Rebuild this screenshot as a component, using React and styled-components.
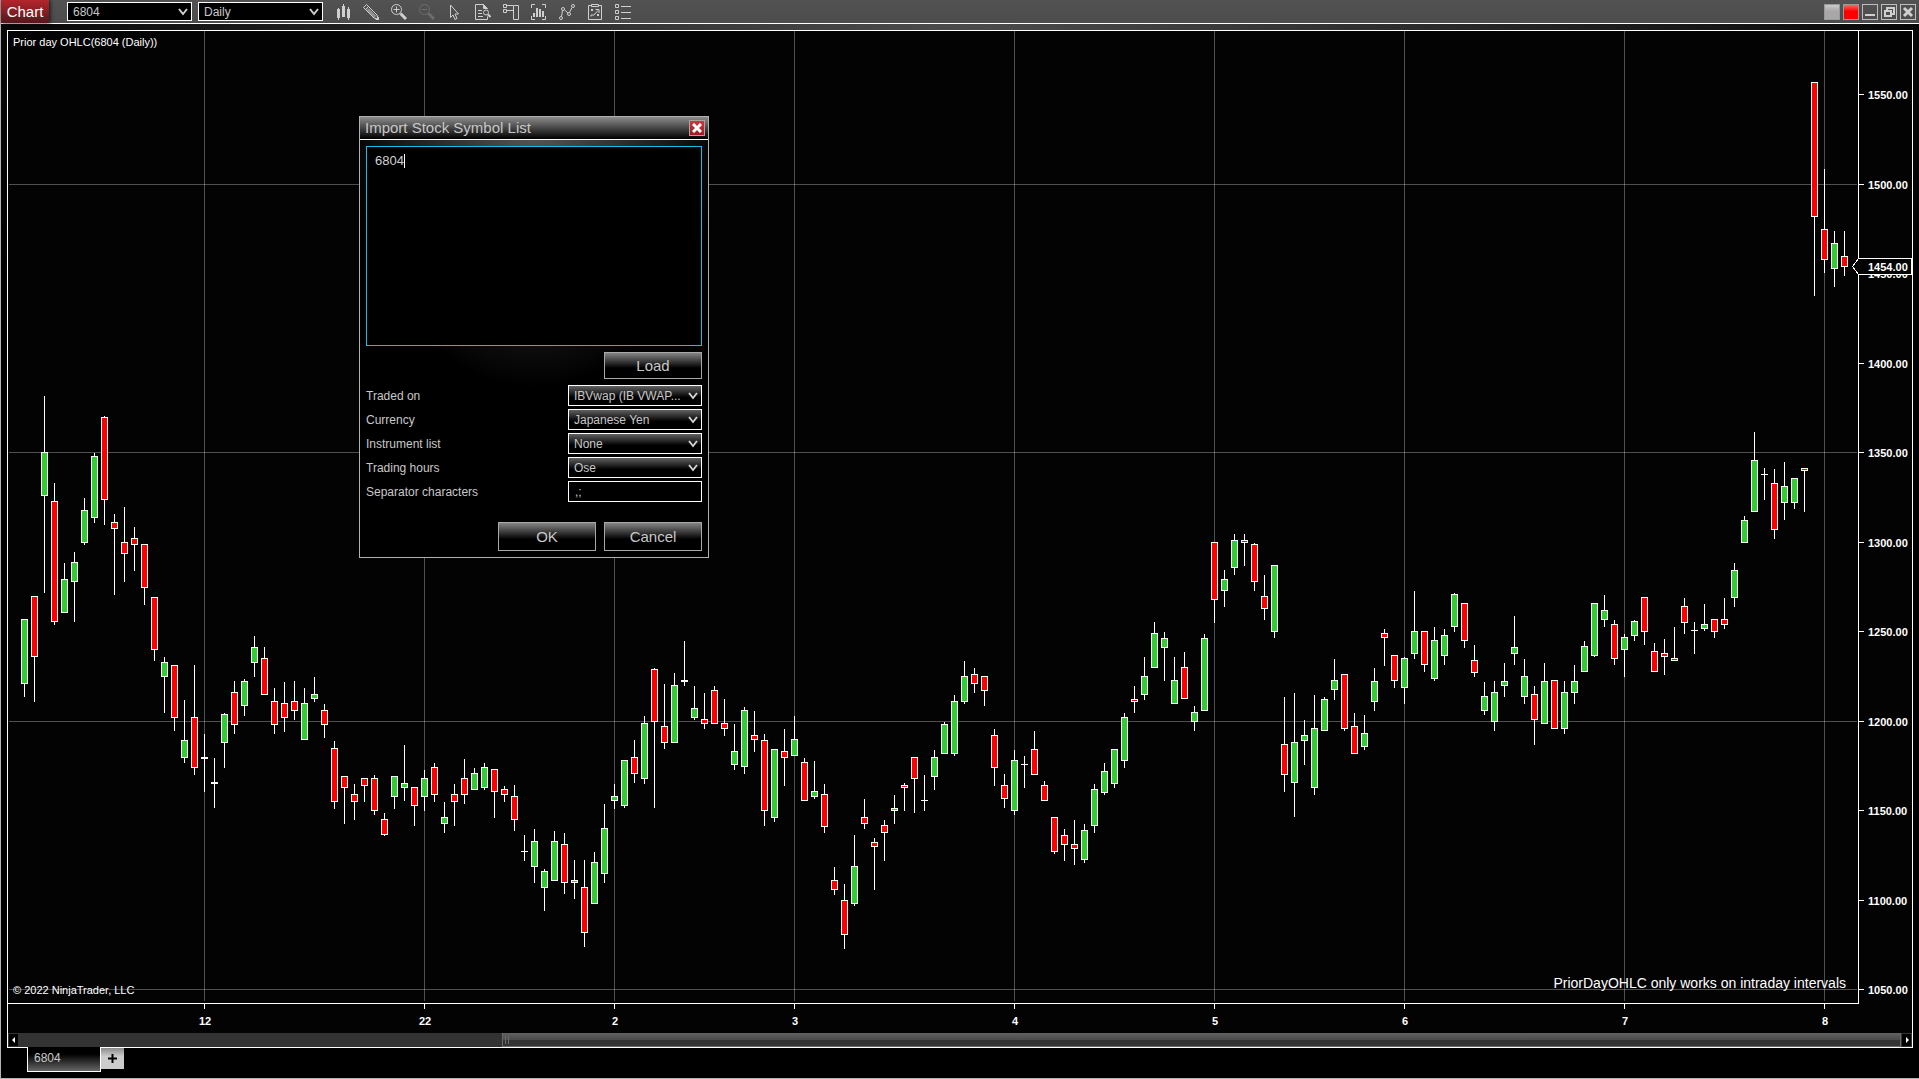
import React from 'react';
import styled, { createGlobalStyle, css } from 'styled-components';

// one row per bar: high, body top, body bottom, low, 1 = up / 0 = down
const BARS = [
	[619, 619, 684, 697, 1], [596, 596, 657, 702, 0], [396, 452, 496, 593, 1], [483, 501, 622, 625, 0],
	[563, 579, 613, 613, 1], [552, 562, 582, 622, 1], [498, 510, 543, 545, 1], [453, 456, 518, 523, 1],
	[416, 417, 500, 525, 0], [514, 522, 529, 595, 0], [507, 542, 554, 582, 0], [527, 538, 545, 571, 0],
	[544, 544, 588, 605, 0], [597, 597, 650, 661, 0], [657, 662, 677, 713, 1], [665, 665, 718, 731, 0],
	[700, 740, 758, 763, 1], [665, 717, 768, 775, 0], [734, 757, 759, 792, 1], [758, 782, 784, 808, 1],
	[713, 714, 743, 768, 1], [681, 692, 725, 734, 0], [679, 681, 706, 716, 1], [636, 647, 663, 677, 1],
	[647, 658, 695, 695, 0], [688, 701, 725, 734, 0], [682, 703, 718, 732, 0], [681, 701, 711, 720, 0],
	[688, 703, 740, 740, 1], [677, 694, 699, 702, 1], [704, 710, 725, 738, 0], [741, 748, 802, 809, 0],
	[776, 776, 788, 824, 0], [784, 794, 802, 820, 0], [778, 778, 786, 802, 0], [775, 778, 811, 815, 0],
	[813, 819, 835, 836, 0], [776, 776, 797, 809, 1], [745, 783, 788, 801, 1], [787, 787, 806, 826, 0],
	[770, 778, 797, 811, 1], [763, 767, 795, 802, 0], [802, 817, 824, 833, 1], [784, 794, 802, 826, 0],
	[759, 778, 795, 804, 0], [768, 773, 790, 790, 1], [763, 767, 788, 790, 1], [769, 769, 792, 818, 0],
	[786, 789, 795, 802, 0], [785, 796, 820, 831, 0], [835, 851, 852, 861, 1], [829, 841, 867, 883, 1],
	[869, 871, 888, 911, 1], [831, 841, 881, 881, 1], [833, 844, 883, 894, 0], [860, 880, 883, 899, 1],
	[860, 887, 933, 947, 0], [852, 862, 904, 904, 1], [804, 828, 874, 883, 1], [784, 796, 801, 809, 1],
	[760, 760, 806, 808, 1], [740, 757, 774, 783, 0], [716, 723, 779, 784, 1], [668, 669, 722, 808, 0],
	[684, 726, 743, 749, 0], [673, 685, 743, 743, 1], [641, 680, 682, 686, 1], [686, 708, 718, 720, 1],
	[693, 719, 724, 729, 0], [686, 690, 724, 724, 0], [699, 723, 729, 736, 0], [724, 751, 765, 770, 1],
	[707, 710, 767, 774, 1], [711, 735, 740, 752, 0], [734, 740, 811, 826, 0], [749, 749, 818, 822, 1],
	[729, 751, 758, 786, 0], [716, 739, 756, 756, 1], [758, 762, 801, 801, 0], [761, 791, 797, 799, 1],
	[784, 794, 827, 833, 0], [867, 880, 890, 895, 0], [884, 900, 935, 949, 0], [835, 866, 904, 906, 1],
	[799, 817, 824, 829, 0], [838, 842, 847, 890, 0], [820, 825, 833, 861, 0], [795, 808, 811, 824, 1],
	[783, 785, 788, 811, 0], [757, 757, 779, 813, 0], [775, 800, 801, 811, 1], [750, 757, 777, 790, 1],
	[722, 724, 754, 754, 1], [695, 701, 754, 756, 1], [661, 676, 702, 704, 1], [668, 674, 684, 693, 0],
	[676, 676, 691, 706, 0], [729, 735, 768, 786, 0], [774, 785, 799, 808, 0], [750, 760, 811, 815, 1],
	[756, 764, 765, 788, 1], [731, 749, 775, 775, 0], [781, 785, 801, 801, 0], [817, 817, 852, 854, 0],
	[829, 835, 845, 861, 0], [820, 844, 849, 865, 0], [824, 830, 860, 863, 1], [784, 789, 826, 833, 1],
	[763, 771, 793, 795, 1], [749, 749, 784, 788, 1], [713, 717, 761, 768, 1], [686, 699, 702, 713, 0],
	[657, 676, 695, 700, 1], [622, 633, 668, 668, 1], [632, 638, 648, 681, 1], [657, 680, 704, 704, 1],
	[652, 667, 699, 699, 0], [706, 712, 722, 731, 1], [634, 638, 711, 711, 1], [542, 542, 600, 623, 0],
	[570, 579, 591, 607, 1], [534, 540, 568, 575, 1], [534, 540, 543, 566, 0], [543, 544, 582, 591, 0],
	[575, 596, 609, 620, 0], [565, 565, 632, 638, 1], [697, 744, 775, 792, 0], [693, 742, 783, 817, 1],
	[720, 735, 741, 765, 1], [695, 728, 788, 795, 1], [697, 699, 731, 731, 1], [659, 680, 690, 700, 1],
	[674, 674, 729, 731, 0], [713, 726, 754, 754, 0], [715, 733, 747, 750, 1], [668, 681, 702, 711, 1],
	[629, 633, 638, 666, 0], [655, 655, 681, 688, 0], [657, 658, 688, 704, 1], [591, 631, 654, 659, 1],
	[631, 631, 665, 672, 0], [627, 640, 679, 681, 1], [629, 635, 656, 665, 1], [593, 594, 627, 632, 1],
	[603, 603, 641, 648, 0], [645, 660, 673, 677, 0], [682, 696, 711, 715, 1], [681, 692, 722, 731, 1],
	[663, 681, 686, 697, 1], [616, 647, 654, 665, 1], [659, 676, 697, 704, 1], [686, 694, 720, 745, 0],
	[663, 681, 724, 724, 1], [680, 680, 729, 729, 0], [681, 692, 729, 734, 1], [665, 681, 693, 704, 1],
	[641, 646, 672, 672, 1], [603, 603, 656, 657, 1], [595, 610, 620, 627, 1], [620, 624, 659, 665, 0],
	[634, 637, 650, 677, 1], [620, 621, 636, 641, 1], [597, 597, 632, 645, 0], [643, 651, 672, 672, 0],
	[639, 653, 657, 675, 0], [627, 658, 661, 661, 0], [598, 606, 623, 634, 0], [622, 630, 631, 654, 1],
	[604, 624, 629, 631, 1], [619, 619, 632, 638, 0], [598, 619, 625, 629, 0], [563, 570, 598, 607, 1],
	[516, 520, 543, 543, 1], [432, 460, 512, 512, 1], [468, 474, 475, 500, 1], [469, 483, 530, 539, 0],
	[462, 486, 503, 520, 1], [478, 478, 503, 509, 1], [468, 468, 471, 512, 0], [82, 82, 217, 296, 0],
	[169, 229, 260, 273, 0], [231, 243, 269, 287, 1], [231, 256, 267, 276, 0],
];

const PRICES = [
	{ label: '1550.00', y: 94 },
	{ label: '1500.00', y: 184, grid: true },
	{ label: '1450.00', y: 273 },
	{ label: '1400.00', y: 363 },
	{ label: '1350.00', y: 452, grid: true },
	{ label: '1300.00', y: 542 },
	{ label: '1250.00', y: 631 },
	{ label: '1200.00', y: 721, grid: true },
	{ label: '1150.00', y: 810 },
	{ label: '1100.00', y: 900 },
	{ label: '1050.00', y: 989, grid: true },
];

const DATES = [
	['12', 204],
	['22', 424],
	['2', 614],
	['3', 794],
	['4', 1014],
	['5', 1214],
	['6', 1404],
	['7', 1624],
	['8', 1824],
];

const Candle = ({ x, bar }) => {
	const [high, top, bottom, low, up] = bar;
	const inner = bottom - top - 2;

	return (
		<g>
			<rect x={x} y={high} width='1' height={low - high} fill='#fff' />
			<rect x={x - 3} y={top} width='7' height={bottom - top} fill='#fff' />
			{inner > 0 && (
				<rect
					x={x - 2}
					y={top + 1}
					width='5'
					height={inner}
					fill={up ? '#32cd32' : '#ff0000'}
				/>
			)}
		</g>
	);
};

const PriceChart = () => (
	<ChartSvg viewBox='8 31 1904 1002' role='img' aria-label='6804 daily chart'>
		<g fill='#fff' fillOpacity='0.3'>
			{PRICES.filter((p) => p.grid).map((p) => (
				<rect key={p.y} x='9' y={p.y} width='1848' height='1' />
			))}
			{DATES.map(([, x]) => (
				<rect key={x} x={x} y='31' width='1' height='970' />
			))}
		</g>

		{BARS.map((bar, i) => (
			<Candle key={i} x={24 + i * 10} bar={bar} />
		))}

		<rect x='1858' y='31' width='1' height='973' fill='#fff' />
		<rect x='8' y='1003' width='1851' height='1' fill='#fff' />

		{PRICES.map((p) => (
			<g key={p.label} fill='#fff'>
				<rect x='1859' y={p.y} width='5' height='1' />
				<AxisText x='1868' y={p.y + 5}>
					{p.label}
				</AxisText>
			</g>
		))}
		{DATES.map(([label, x]) => (
			<g key={x} fill='#fff'>
				<rect x={x} y='1004' width='1' height='5' />
				<AxisText x={x + 1} y='1025' textAnchor='middle'>
					{label}
				</AxisText>
			</g>
		))}

		<path
			d='M1852.5 266.5 L1858.5 258.5 H1911.5 V274.5 H1858.5 Z'
			fill='#030303'
			stroke='#fff'
		/>
		<AxisText x='1868' y='271' fill='#fff'>
			1454.00
		</AxisText>
	</ChartSvg>
);

const ICONS = [
	{
		label: 'Bars type',
		art: (
			<path
				fill='currentColor'
				d='M2 5h1V4h1v1h1v9H4v2H3v-2H2zM7 2h1V0h1v2h1v11H7zM12 5h1V3h1v2h1v9h-1v2h-1v-2h-1z'
			/>
		),
	},
	{
		label: 'Drawing tools',
		art: (
			<g fill='none' stroke='currentColor'>
				<path d='M0.5 3.5 3.5 0.5 14 11 15.5 15.5 11 14Z' />
				<path d='M2.5 5.5 5.5 2.5M5 4.5 13 12.5M4 5.5 12 13.5' />
				<path fill='currentColor' d='M13 15.5h2.5V13z' />
			</g>
		),
	},
	{
		label: 'Zoom in',
		art: (
			<g fill='none' stroke='currentColor'>
				<circle cx='5.5' cy='5.5' r='5' />
				<path d='M5.5 2.5v6M2.5 5.5h6' />
				<path strokeWidth='3' d='M9.5 9.5 15 15' />
			</g>
		),
	},
	{
		label: 'Zoom out',
		dim: true,
		art: (
			<g fill='none' stroke='currentColor'>
				<circle cx='5.5' cy='5.5' r='5' />
				<path d='M2.5 5.5h6' />
				<path strokeWidth='3' d='M9.5 9.5 15 15' />
			</g>
		),
	},
	{
		label: 'Cursor',
		art: (
			<path
				fill='none'
				stroke='currentColor'
				d='M3.5 1v12.5L6 11l2 4.5 2-1L8 10h3.5z'
			/>
		),
	},
	{
		label: 'Data box',
		art: (
			<g fill='none' stroke='currentColor'>
				<path d='M12.5 12.5v3H0.5v-15h8l4 4' />
				<path fill='currentColor' d='M8.5 0.5v4h4z' />
				<path d='M3 6.5h4M3 9.5h4M3 12.5h5' />
				<circle cx='11' cy='8.5' r='2.5' />
				<path strokeWidth='2' d='M13 10.5 15.5 13' />
			</g>
		),
	},
	{
		label: 'Chart trader',
		art: (
			<path
				fill='none'
				stroke='currentColor'
				d='M0.5 0.5h3v3h-3zM0.5 5.5h3v3h-3zM10.5 1.5h5v14h-5zM4 1.5h6M4 6.5h6'
			/>
		),
	},
	{
		label: 'Data series',
		art: (
			<g>
				<path
					fill='none'
					stroke='currentColor'
					d='M0.5 4V0.5H4M11 0.5h3.5V4M14.5 12v3.5H11M4 15.5H0.5V12'
				/>
				<path
					fill='currentColor'
					d='M2 9h2v4H2zM5 4h2v9H5zM8 5h2v8H8zM11 7h2v6h-2z'
				/>
			</g>
		),
	},
	{
		label: 'Indicators',
		art: (
			<g fill='none' stroke='currentColor'>
				<circle cx='2' cy='14' r='1.5' />
				<circle cx='4' cy='5' r='1.5' />
				<circle cx='10' cy='10' r='1.5' />
				<circle cx='14' cy='2' r='1.5' />
				<path d='M2.5 12.5 3.5 6.5M5.5 6 9 9M10.5 8.5 13 3.5' />
			</g>
		),
	},
	{
		label: 'Strategies',
		art: (
			<g fill='none' stroke='currentColor'>
				<path d='M4 1.5H1.5v14h13v-14H12M4.5 0.5h7v2h-7z' />
				<path d='M4 5l2 2M6 5 4 7M10 10l2 2M12 10l-2 2M4 12.5V11h3l4-4.5M8.5 5.5H12V9' />
			</g>
		),
	},
	{
		label: 'Properties',
		art: (
			<path
				fill='none'
				stroke='currentColor'
				d='M0.5 0.5h3v3h-3zM0.5 6.5h3v3h-3zM0.5 12.5h3v3h-3zM6 2.5h10M6 8.5h10M6 14.5h10'
			/>
		),
	},
];

const Dropdown = ({ id, value, dark, label }) => (
	<SelectWrap $dark={dark}>
		<SelectBox id={id} aria-label={label} defaultValue={value} $dark={dark}>
			<option>{value}</option>
		</SelectBox>
		<Chevron viewBox='0 0 10 8' aria-hidden='true'>
			<path d='M1 1 5 6 9 1' fill='none' stroke='currentColor' strokeWidth='2' />
		</Chevron>
	</SelectWrap>
);

const FIELDS = [
	['traded-on', 'Traded on', 'IBVwap (IB VWAP...'],
	['currency', 'Currency', 'Japanese Yen'],
	['instrument-list', 'Instrument list', 'None'],
	['trading-hours', 'Trading hours', 'Ose'],
];

const ImportDialog = () => (
	<Dialog role='dialog' aria-labelledby='import-title'>
		<DialogTitle>
			<DialogHeading id='import-title'>Import Stock Symbol List</DialogHeading>
			<CloseButton aria-label='Close'>
				<svg width='10' height='10' viewBox='0 0 10 10' aria-hidden='true'>
					<path d='M1 1 9 9M9 1 1 9' stroke='#fff' strokeWidth='3' />
				</svg>
			</CloseButton>
		</DialogTitle>
		<DialogBody>
			<SymbolBox>
				<SymbolInput aria-label='Symbols' defaultValue='6804' spellCheck={false} />
				<Caret />
			</SymbolBox>
			<LoadRow>
				<PushButton $height={27}>Load</PushButton>
			</LoadRow>
			<Fields>
				{FIELDS.map(([id, label, value]) => (
					<Field key={id}>
						<FieldLabel htmlFor={id}>{label}</FieldLabel>
						<Dropdown id={id} value={value} />
					</Field>
				))}
				<Field>
					<FieldLabel htmlFor='separators'>Separator characters</FieldLabel>
					<TextInput id='separators' defaultValue=',;' />
				</Field>
			</Fields>
			<Actions>
				<PushButton $height={29}>OK</PushButton>
				<PushButton $height={29}>Cancel</PushButton>
			</Actions>
		</DialogBody>
	</Dialog>
);

const App = () => {
	return (
		<>
			<GlobalStyle />
			<Window>
				<Toolbar>
					<ChartMenu>Chart</ChartMenu>
					<Selectors>
						<Dropdown dark value='6804' label='Instrument' />
						<Dropdown dark value='Daily' label='Interval' />
					</Selectors>
					<Tools>
						{ICONS.map((icon) => (
							<ToolButton key={icon.label} aria-label={icon.label} $dim={icon.dim}>
								<svg width='16' height='16' viewBox='0 0 16 16' aria-hidden='true'>
									{icon.art}
								</svg>
							</ToolButton>
						))}
					</Tools>
					<WindowButtons>
						<LinkButton aria-label='Instrument link' $color='#a9a7a8' />
						<LinkButton aria-label='Interval link' $color='#ff0000' />
						<WindowButton aria-label='Minimize'>
							<svg width='14' height='14' viewBox='0 0 14 14' aria-hidden='true'>
								<path d='M2 9h10v2H2z' fill='currentColor' />
							</svg>
						</WindowButton>
						<WindowButton aria-label='Restore'>
							<svg width='14' height='14' viewBox='0 0 14 14' aria-hidden='true'>
								<path
									d='M5 6V3h7v6H9M3 6h6v5H3z'
									fill='none'
									stroke='currentColor'
									strokeWidth='2'
								/>
							</svg>
						</WindowButton>
						<WindowButton aria-label='Close window'>
							<svg width='14' height='14' viewBox='0 0 14 14' aria-hidden='true'>
								<path d='M3 3l8 8M11 3l-8 8' stroke='currentColor' strokeWidth='3' />
							</svg>
						</WindowButton>
					</WindowButtons>
				</Toolbar>

				<Frame>
					<ChartArea>
						<PriceChart />
						<IndicatorLabel>Prior day OHLC(6804 (Daily))</IndicatorLabel>
						<Copyright>© 2022 NinjaTrader, LLC</Copyright>
						<Notice>PriorDayOHLC only works on intraday intervals</Notice>
					</ChartArea>
					<Scrollbar>
						<ScrollArrow aria-label='Scroll left'>
							<svg width='4' height='6' viewBox='0 0 4 6' aria-hidden='true'>
								<path d='M3 0v6L0 3z' fill='#fff' />
							</svg>
						</ScrollArrow>
						<ScrollThumb>
							<Grip />
						</ScrollThumb>
						<ScrollArrow aria-label='Scroll right'>
							<svg width='4' height='6' viewBox='0 0 4 6' aria-hidden='true'>
								<path d='M1 0v6l3-3z' fill='#fff' />
							</svg>
						</ScrollArrow>
					</Scrollbar>
				</Frame>

				<Tabs>
					<Tab>6804</Tab>
					<AddTab aria-label='New tab'>
						<svg width='9' height='9' viewBox='0 0 9 9' aria-hidden='true'>
							<path d='M4.5 0v9M0 4.5h9' stroke='#000' strokeWidth='2' />
						</svg>
					</AddTab>
				</Tabs>

				<ImportDialog />
			</Window>
		</>
	);
};

export default App;

const GlobalStyle = createGlobalStyle`
	* {
		box-sizing: border-box;
	}

	body {
		margin: 0;
		background-color: #000;
		color: #c8c8c8;
		font-family: "Liberation Sans", Arial, sans-serif;
		font-size: 12px;
	}

	button, select, input, textarea {
		margin: 0;
		padding: 0;
		color: inherit;
		font: inherit;
		outline: none;
		border-radius: 0;
	}
`;

const Window = styled.div`
	position: relative;
	display: flex;
	flex-direction: column;
	min-height: 100vh;
	border-left: 1px solid #b4b4b4;
	border-bottom: 1px solid #b4b4b4;
	background: radial-gradient(ellipse 55% 75% at top center, #4d4d4d, #000);
`;

const Toolbar = styled.header`
	display: flex;
	align-items: center;
	height: 24px;
	padding-right: 3px;
	border-bottom: 1px solid #fff;
	background: linear-gradient(#525252, #4c4c4c);
`;

const ChartMenu = styled.button`
	align-self: stretch;
	width: 48px;
	border: none;
	background: linear-gradient(#b3262c, #55181c);
	box-shadow: 1px 0 4px #111;
	color: #fff;
	font-size: 15px;
`;

const Selectors = styled.div`
	display: flex;
	gap: 6px;
	margin: 0 12px 0 18px;
`;

const SelectWrap = styled.div`
	position: relative;
	width: ${(p) => (p.$dark ? '125px' : '134px')};
`;

const SelectBox = styled.select`
	display: block;
	appearance: none;
	width: 100%;
	height: 21px;
	padding: 0 20px 0 5px;
	border: 1px solid #fff;
	background: linear-gradient(#606060, #000 60%);
	color: #c8c8c8;

	${(p) =>
		p.$dark &&
		css`
			height: 19px;
			background: #000;
		`}
`;

const Chevron = styled.svg`
	position: absolute;
	top: 50%;
	right: 4px;
	width: 10px;
	height: 8px;
	margin-top: -4px;
	pointer-events: none;
	color: #d0d0d0;
`;

const Tools = styled.div`
	display: flex;
	gap: 12px;
`;

const ToolButton = styled.button`
	display: flex;
	width: 16px;
	height: 16px;
	border: none;
	background: none;
	color: ${(p) => (p.$dim ? '#6c6c6c' : '#cfcfcf')};
`;

const WindowButtons = styled.div`
	display: flex;
	gap: 3px;
	margin-left: auto;
`;

const WindowButton = styled.button`
	display: flex;
	width: 16px;
	height: 16px;
	border: 1px solid #bdbdbd;
	background: none;
	color: #cfcfcf;
`;

const LinkButton = styled(WindowButton)`
	background: linear-gradient(rgba(255, 255, 255, 0.4), rgba(255, 255, 255, 0) 45%)
		${(p) => p.$color};
	border-color: #9a9a9a;
`;

const Frame = styled.main`
	margin: 6px 6px 0;
	border: 1px solid #fff;
	background-color: #030303;
`;

const ChartArea = styled.div`
	position: relative;
	color: #fff;
`;

const ChartSvg = styled.svg`
	display: block;
	width: 100%;
	shape-rendering: crispEdges;
`;

const AxisText = styled.text`
	font-size: 11px;
	font-weight: 700;
`;

const IndicatorLabel = styled.div`
	position: absolute;
	top: 4px;
	left: 5px;
	font-size: 11px;
	line-height: 14px;
`;

const Copyright = styled.div`
	position: absolute;
	bottom: 36px;
	left: 5px;
	font-size: 11px;
	line-height: 14px;
`;

const Notice = styled.div`
	position: absolute;
	right: 66px;
	bottom: 41px;
	font-size: 14px;
	line-height: 18px;
`;

const Scrollbar = styled.div`
	display: grid;
	grid-template-columns: 9px 9fr 26fr 9px;
	height: 14px;
	padding: 0 1px;
	background-color: #333;
`;

const ScrollArrow = styled.button`
	display: flex;
	align-items: center;
	justify-content: center;
	margin: 1px 0;
	border: none;
	background-color: #000;
`;

const ScrollThumb = styled.div`
	display: flex;
	align-items: center;
	grid-column: 3;
	margin-right: 1px;
	padding-left: 2px;
	border: 1px solid #6a6a6a;
	border-top: none;
	background: linear-gradient(#626262, #4c4c4c 50%, #333 50%);
`;

const Grip = styled.span`
	width: 4px;
	height: 8px;
	border: solid #6e6e6e;
	border-width: 0 1px;
`;

const Tabs = styled.nav`
	display: flex;
	align-items: flex-start;
	height: 30px;
	padding-left: 26px;
`;

const Tab = styled.button`
	width: 74px;
	height: 25px;
	margin-top: -1px;
	padding: 0 0 2px 6px;
	border: 1px solid #fff;
	border-top: none;
	background: linear-gradient(#000 30%, #666);
	text-align: left;
`;

const AddTab = styled.button`
	display: flex;
	align-items: center;
	justify-content: center;
	width: 23px;
	height: 21px;
	border: none;
	background: linear-gradient(#8a8a8a, #ccc 40%);
`;

const Dialog = styled.section`
	position: absolute;
	top: 116px;
	left: 358px;
	width: 350px;
	border: 1px solid #b0b0b0;
	background: radial-gradient(ellipse 190px 270px at top center, #585858, #000);
`;

const DialogTitle = styled.div`
	display: flex;
	align-items: center;
	justify-content: space-between;
	height: 23px;
	padding: 0 3px 0 5px;
	border-bottom: 1px solid #fff;
	background: linear-gradient(#8c8c8c, #000);
`;

const DialogHeading = styled.h1`
	margin: 0;
	padding-bottom: 2px;
	font-size: 15px;
	font-weight: 400;
`;

const CloseButton = styled.button`
	display: flex;
	align-items: center;
	justify-content: center;
	width: 16px;
	height: 16px;
	border: 1px solid #b0a0a0;
	background: linear-gradient(#c43a40, #a01c22);
`;

const DialogBody = styled.div`
	padding: 6px;
`;

const SymbolBox = styled.div`
	position: relative;
	height: 200px;
`;

const SymbolInput = styled.textarea`
	display: block;
	width: 100%;
	height: 100%;
	padding: 6px 8px;
	border: 1px solid #14bdf0;
	background-color: #000;
	color: #d0d0d0;
	font-size: 13px;
	line-height: 16px;
	resize: none;
`;

const Caret = styled.span`
	position: absolute;
	top: 8px;
	left: 38px;
	width: 1px;
	height: 14px;
	background-color: #fff;
`;

const LoadRow = styled.div`
	display: flex;
	justify-content: flex-end;
	margin: 6px 0;
`;

const PushButton = styled.button`
	width: 98px;
	height: ${(p) => p.$height}px;
	border: 1px solid #a8a8a8;
	background: linear-gradient(#848484, #000 60%);
	font-size: 15px;
`;

const Fields = styled.div`
	display: grid;
	gap: 3px;
`;

const Field = styled.div`
	display: flex;
	justify-content: space-between;
	height: 21px;
`;

const FieldLabel = styled.label`
	line-height: 23px;
`;

const TextInput = styled.input`
	width: 134px;
	height: 21px;
	padding: 0 6px;
	border: 1px solid #fff;
	background-color: #000;
`;

const Actions = styled.div`
	display: flex;
	justify-content: flex-end;
	gap: 8px;
	margin-top: 20px;
`;
